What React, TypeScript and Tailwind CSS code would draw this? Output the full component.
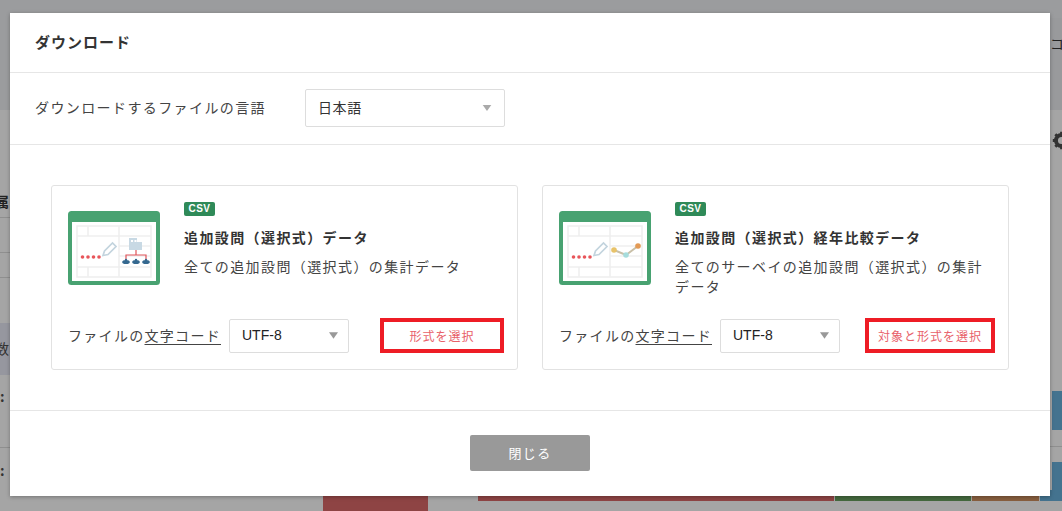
const jp = "font-['Noto_Sans_CJK_JP','Noto_Sans',sans-serif]";

function Caret({ className }: { className: string }) {
  return (
    <svg viewBox="0 0 10 7" className={className}>
      <path d="M0 0h10L5 7z" fill="currentColor" />
    </svg>
  );
}

function SheetIcon({ kind }: { kind: 'tree' | 'line' }) {
  return (
    <svg viewBox="0 0 92 74" className="w-[92px] h-[74px] shrink-0 mt-[9px]">
      <rect width="92" height="74" rx="3.5" fill="#48a271" />
      <rect x="4" y="11" width="84" height="59" fill="#fff" />
      <g fill="none" stroke="#efefef" strokeWidth="1.6">
        <rect x="9" y="15" width="74" height="51" />
        <path d="M9 25h74M9 56h74M20 15v10M20 56v10M51 15v51M51 35h32M51 45h32" />
      </g>
      <g fill="#e8555a">
        <circle cx="14.5" cy="46" r="1.8" />
        <circle cx="20" cy="46" r="1.8" />
        <circle cx="25.5" cy="46" r="1.8" />
        <circle cx="31" cy="46" r="1.8" />
      </g>
      <path d="M35 44.5l1.5-4.5 8-8 3.5 3.5-8 8z" fill="#fff" stroke="#c3d4de" strokeWidth="1.7" />
      {kind === 'tree' ? (
        <g>
          <path d="M61 27h8v4h5v8H61z" fill="#c8d9e4" />
          <rect x="63" y="29" width="2" height="2" fill="#fff" />
          <rect x="66.5" y="29" width="2" height="2" fill="#fff" />
          <path d="M58 48v-4h20v4M68 39v5" fill="none" stroke="#e0555a" strokeWidth="1.2" />
          <g fill="#34688f">
            <ellipse cx="58" cy="51" rx="3.8" ry="2" />
            <ellipse cx="68" cy="51" rx="3.8" ry="2" />
            <ellipse cx="78" cy="51" rx="3.8" ry="2" />
            <circle cx="58" cy="49" r="1.2" />
            <circle cx="68" cy="49" r="1.2" />
            <circle cx="78" cy="49" r="1.2" />
          </g>
        </g>
      ) : (
        <g>
          <path d="M55 39l12 5 12-9" fill="none" stroke="#c9c0a8" strokeWidth="2" />
          <circle cx="55" cy="39" r="2.8" fill="#e8c36a" />
          <circle cx="67" cy="44" r="2.8" fill="#a6dcdc" />
          <circle cx="79" cy="35" r="2.8" fill="#e39a55" />
        </g>
      )}
    </svg>
  );
}

function Card({
  title,
  desc,
  action,
  kind,
  btnWidth,
}: {
  title: string;
  desc: React.ReactNode;
  action: string;
  kind: 'tree' | 'line';
  btnWidth: string;
}) {
  return (
    <div className="w-[467px] h-[185px] border border-[#e2e2e2] rounded-[3px] pl-4 pr-[13px] pt-4 pb-4 flex flex-col justify-between">
      <div className="flex gap-6">
        <SheetIcon kind={kind} />
        <div className="flex flex-col items-start">
          <span className="h-[14px] w-[31px] bg-[#2f8a58] rounded-[2px] text-white text-[10px] leading-[14px] font-bold text-center font-['Liberation_Sans',sans-serif] tracking-[0.5px]">
            CSV
          </span>
          <h3 className="mt-[11px] text-[14px] leading-5 font-bold tracking-[1.4px] text-[#333]">{title}</h3>
          <p className="mt-[9px] text-[14px] leading-5 tracking-[1.4px] text-[#444]">{desc}</p>
        </div>
      </div>
      <div className="flex items-center justify-between">
        <div className="flex items-center gap-2">
          <span className="text-[14px] tracking-[1.3px] text-[#444]">
            ファイルの<span className="underline underline-offset-[3px]">文字コード</span>
          </span>
          <div className="w-[120px] h-[34px] border border-[#ddd] rounded-[2px] bg-white pl-3 pr-[10px] flex items-center justify-between">
            <span className="text-[14px] text-[#222] font-['Liberation_Sans',sans-serif]">UTF-8</span>
            <Caret className="w-[9px] h-[9px] text-[#999]" />
          </div>
        </div>
        <button className={`${btnWidth} h-[35px] border-[4px] border-[#ee1c25] bg-white text-[12px] tracking-[1px] text-[#e8616a]`}>
          {action}
        </button>
      </div>
    </div>
  );
}

function Backdrop() {
  return (
    <div className="absolute inset-0 bg-[#a5a5a5]">
      <div className="h-[110px] bg-[#9b9c9e]" />
      <div className="absolute left-0 top-[217px] w-[10px] h-px bg-[#8f8f8f]" />
      <div className="absolute left-0 top-[252px] w-[10px] h-px bg-[#8f8f8f]" />
      <div className="absolute left-0 top-[277px] w-[10px] h-px bg-[#8f8f8f]" />
      <div className="absolute left-0 top-[323px] w-[10px] h-[52px] bg-[#96979f]" />
      <div className="absolute left-0 top-[447px] w-[10px] h-px bg-[#8f8f8f]" />
      <span className="absolute left-[-5px] top-[191px] text-[14px] font-bold text-[#222]">属</span>
      <span className="absolute left-[-5px] top-[338px] text-[14px] text-[#333]">数</span>
      <span className="absolute left-0 top-[386px] text-[14px] font-bold text-[#333]">:</span>
      <span className="absolute left-0 top-[460px] text-[14px] font-bold text-[#333]">:</span>
      <div className="absolute left-[1050px] top-[18px] w-[12px] h-[92px] bg-[#999a9c]" />
      <span className="absolute left-[1050px] top-[33px] text-[14px] text-[#222] whitespace-nowrap">コー</span>
      <svg viewBox="0 0 24 24" className="absolute left-[1052px] top-[131px] w-[19px] h-[19px] text-[#333]">
        <circle cx="12" cy="12" r="7" fill="none" stroke="currentColor" strokeWidth="5" />
        <path d="M12 1v4M12 19v4M1 12h4M19 12h4M4.2 4.2l2.8 2.8M17 17l2.8 2.8M4.2 19.8L7 17M17 7l2.8-2.8" stroke="currentColor" strokeWidth="3.5" />
      </svg>
      <div className="absolute left-[1052px] top-[391px] w-[10px] h-[39px] bg-[#44738f]" />
      <div className="absolute left-[1050px] top-[446px] w-[12px] h-px bg-[#8f8f8f]" />
      <div className="absolute left-[1052px] top-[462px] w-[10px] h-[39px] bg-[#44738f]" />
      <div className="absolute left-[323px] top-[490px] w-[105px] h-[21px] bg-[#8e4444]" />
      <div className="absolute left-[478px] top-[490px] h-[11px] flex gap-px">
        <div className="w-[356px] bg-[#8e4444]" />
        <div className="w-[136px] bg-[#44693e]" />
        <div className="w-[67px] bg-[#885f3f]" />
        <div className="w-[22px] bg-[#44738f]" />
      </div>
    </div>
  );
}

export default function App() {
  return (
    <div className={`relative h-[511px] w-[1062px] overflow-hidden ${jp}`}>
      <Backdrop />
      <div className="absolute left-[10px] top-[13px] w-[1040px] h-[483px] bg-white shadow-[0_1px_4px_rgba(0,0,0,0.3)] flex flex-col">
        <div className="h-[60px] shrink-0 border-b border-[#e6e6e6] pl-[25px] flex items-center">
          <h2 className="text-[15px] font-bold tracking-[1px] text-[#333]">ダウンロード</h2>
        </div>
        <div className="h-[72px] shrink-0 border-b border-[#e6e6e6] pl-[25px] pb-[2px] flex items-center gap-[39px]">
          <span className="text-[14px] tracking-[1.4px] text-[#444]">ダウンロードするファイルの言語</span>
          <div className="w-[200px] h-[38px] border border-[#ddd] rounded-[2px] pl-3 pr-[12px] flex items-center justify-between">
            <span className="text-[14px] tracking-[0.6px] text-[#333]">日本語</span>
            <Caret className="w-[10px] h-[6px] text-[#aaa]" />
          </div>
        </div>
        <div className="h-[266px] shrink-0 border-b border-[#e6e6e6] px-[41px] pt-[40px] flex gap-6">
          <Card
            kind="tree"
            title="追加設問（選択式）データ"
            desc="全ての追加設問（選択式）の集計データ"
            action="形式を選択"
            btnWidth="w-[124px]"
          />
          <Card
            kind="line"
            title="追加設問（選択式）経年比較データ"
            desc={<>全てのサーベイの追加設問（選択式）の集計<br />データ</>}
            action="対象と形式を選択"
            btnWidth="w-[130px]"
          />
        </div>
        <div className="flex-1 pb-[2px] flex items-center justify-center">
          <button className="w-[120px] h-[36px] bg-[#999] rounded-[2px] text-white text-[13px] tracking-[1.3px]">閉じる</button>
        </div>
      </div>
    </div>
  );
}
